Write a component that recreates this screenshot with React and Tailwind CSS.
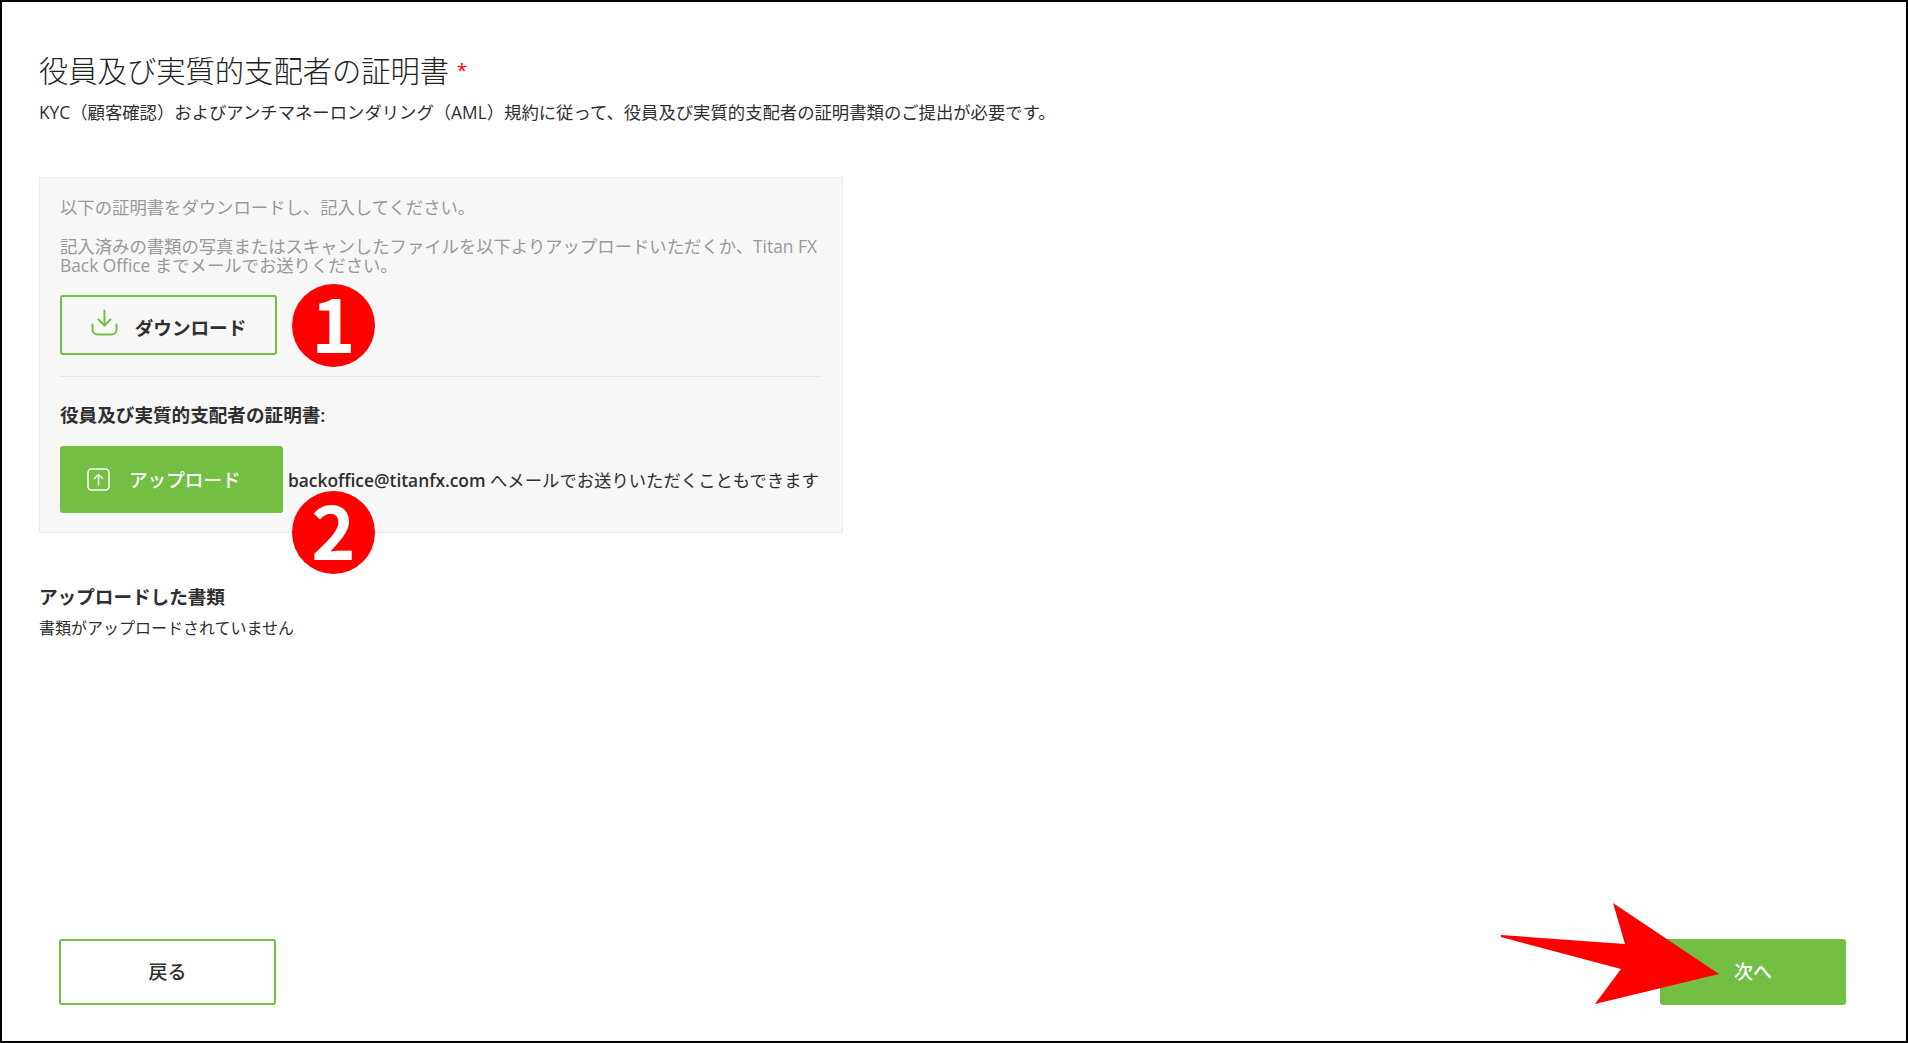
import React from "react";

const fontStack = "font-['Open_Sans','Noto_Sans_CJK_JP',sans-serif]";

const DownloadIcon = () => (
  <svg width="27" height="27" viewBox="0 0 27 27" fill="none" stroke="#72bf44" strokeWidth="2" strokeLinecap="round" strokeLinejoin="round">
    <path d="M13.5 1.5v15" />
    <path d="M7.5 10.5l6 6 6-6" />
    <path d="M1.5 15.5v5a5 5 0 0 0 5 5h14a5 5 0 0 0 5-5v-5" />
  </svg>
);

const UploadIcon = () => (
  <svg width="23" height="23" viewBox="0 0 23 23" fill="none" stroke="#ffffff" strokeWidth="1.5" strokeLinecap="round" strokeLinejoin="round">
    <rect x="1" y="1" width="21" height="21" rx="3.5" />
    <path d="M11.5 17V7" />
    <path d="M7.5 10.5l4-4 4 4" />
  </svg>
);

const NumberBadge = ({ n, className }) => (
  <div
    className={`absolute left-[290px] w-[83px] h-[83px] pb-[11px] rounded-full bg-[#ff0000] flex items-center justify-center text-white font-['Noto_Sans_CJK_JP',sans-serif] font-bold text-[75px] leading-none ${className}`}
  >
    {n}
  </div>
);

const App = () => {
  return (
    <div className={`relative h-[1043px] bg-white border-2 border-black text-[#2f2f2f] flex flex-col overflow-hidden ${fontStack}`}>
      <div className="px-[37px] flex-1">
        <h1 className="mt-[49px] text-[29.3px] leading-[38px] font-light text-[#222222]">
          役員及び実質的支配者の証明書 <span className="text-[#ff0000] font-normal text-[19px] align-[5px]">*</span>
        </h1>
        <p className="mt-[10px] text-[17.35px] leading-[24px]">
          KYC（顧客確認）およびアンチマネーロンダリング（AML）規約に従って、役員及び実質的支配者の証明書類のご提出が必要です。
        </p>

        <div className="mt-[53px] w-[804px] bg-[#f7f7f7] border border-[#ebebeb] pt-[19px] px-[20px] pb-[19px]">
          <p className="text-[17.35px] leading-[20px] text-[#999999]">以下の証明書をダウンロードし、記入してください。</p>
          <p className="mt-[20px] text-[17.35px] leading-[19px] text-[#999999]">
            記入済みの書類の写真またはスキャンしたファイルを以下よりアップロードいただくか、Titan FX Back Office までメールでお送りください。
          </p>
          <button className="mt-[20px] w-[217px] h-[60px] border-2 border-[#72bf44] rounded-[3px] flex items-center justify-center gap-[17px] text-[18.6px] font-semibold text-[#2f2f2f]">
            <span className="mb-[6px]">
              <DownloadIcon />
            </span>
            <span className="mt-[5px]">ダウンロード</span>
          </button>
          <hr className="mt-[21px] border-[#e8e8e8]" />
          <div className="mt-[26px] text-[18.6px] leading-[24px] font-semibold">役員及び実質的支配者の証明書:</div>
          <div className="mt-[19px] flex items-center">
            <button className="w-[223px] h-[67px] pl-[27px] bg-[#72bf44] rounded-[3px] flex items-center gap-[19px] text-white text-[18.6px] font-medium">
              <UploadIcon />
              <span>アップロード</span>
            </button>
            <span className="ml-[5px] text-[17.35px] leading-[20px]">
              <span className="font-semibold">backoffice@titanfx.com</span> へメールでお送りいただくこともできます
            </span>
          </div>
        </div>

        <h2 className="mt-[52px] text-[18.6px] leading-[24px] font-semibold">アップロードした書類</h2>
        <p className="mt-[7px] text-[16px] leading-[24px]">書類がアップロードされていません</p>
      </div>

      <div className="flex justify-between pl-[57px] pr-[60px] pb-[36px]">
        <button className="w-[217px] h-[66px] border-2 border-[#72bf44] rounded-[3px] bg-white text-[19px] font-medium">戻る</button>
        <button className="w-[186px] h-[66px] bg-[#72bf44] rounded-[3px] text-white text-[19px] font-medium">次へ</button>
      </div>

      {/* red annotations on top of the page */}
      <NumberBadge n="1" className="top-[282px]" />
      <NumberBadge n="2" className="top-[489px]" />
      <svg className="absolute left-[1498px] top-[900px]" width="222" height="106" viewBox="0 0 222 106">
        <polygon points="1,33 125,42 113,1 219,72 95,102 121,67 1,35" fill="#ff0000" />
      </svg>
    </div>
  );
};

export default App;
